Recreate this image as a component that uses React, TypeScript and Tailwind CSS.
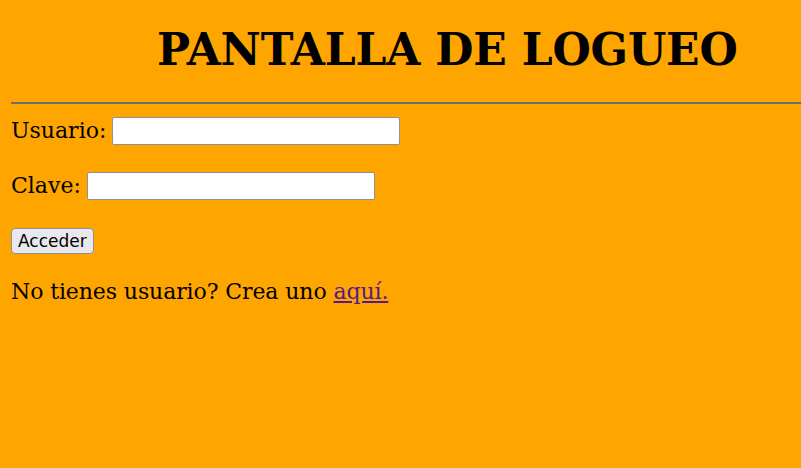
export default function App() {
  return (
    <div className="min-h-[468px] w-[801px] bg-[#ffa500] pl-[11px] pt-[22px] font-['DejaVu_Serif',serif] text-black">
      <h1 className="pl-[146px] font-['DejaVu_Serif',serif] text-[44px] font-bold leading-[56px] tracking-[-0.2px]">
        PANTALLA DE LOGUEO
      </h1>
      <hr className="mt-[24px] border-t-2 border-t-[#6e6e6e] border-b-0" />
      <form className="flex flex-col text-[22px]">
        <p className="mt-[13px] flex items-center gap-[6px] leading-[28px]">
          Usuario:
          <input type="text" className="h-[28px] w-[288px] rounded-[2px] border border-[#8f8f9d] bg-white" />
        </p>
        <p className="mt-[27px] flex items-center gap-[6px] leading-[28px]">
          Clave:
          <input type="password" className="h-[28px] w-[288px] rounded-[2px] border border-[#8f8f9d] bg-white" />
        </p>
        <div className="mt-[23px]">
          <button
            type="button"
            className="h-[26px] rounded-[4px] border border-[#8f8f9d] bg-[#e9e9ed] px-[6px] font-['DejaVu_Sans',sans-serif] text-[17px] leading-[22px]"
          >
            Acceder
          </button>
        </div>
        <p className="mt-[22px] leading-[28px] tracking-[-0.1px]">
          No tienes usuario? Crea uno{" "}
          <a href="#" className="text-[#551a8b] underline">
            aquí.
          </a>
        </p>
      </form>
    </div>
  );
}
